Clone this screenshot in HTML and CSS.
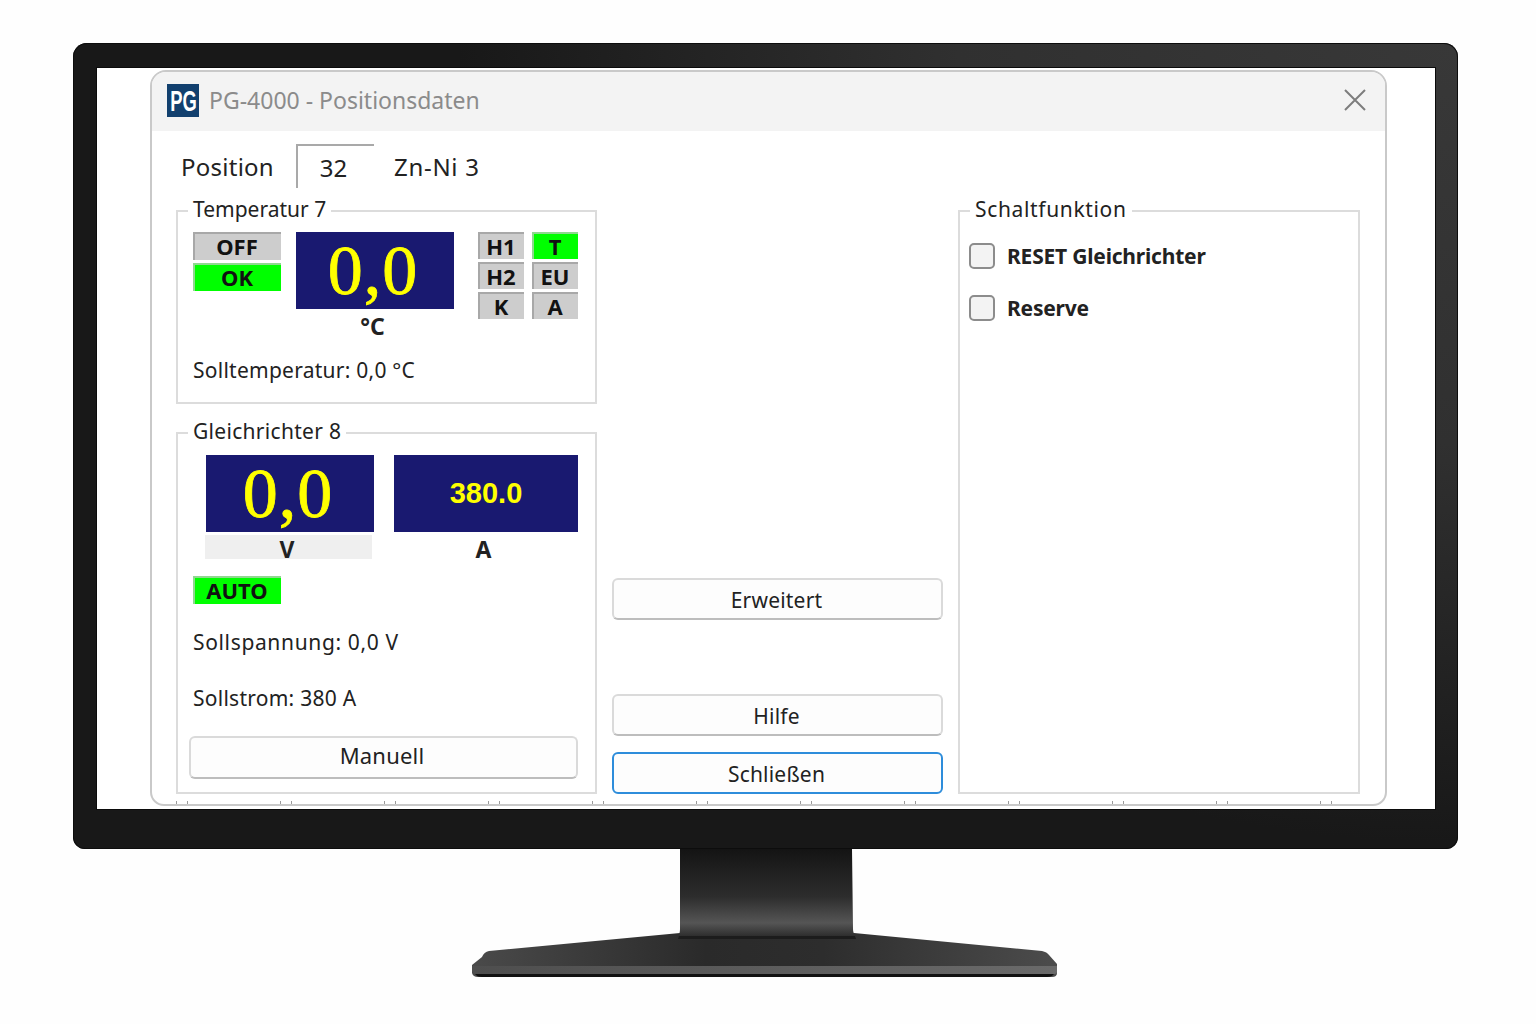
FILE: index.html
```html
<!DOCTYPE html>
<html lang="de">
<head>
  <meta charset="UTF-8" />
  <title>PG-4000 - Positionsdaten</title>
  <link rel="stylesheet" href="styles.css">
</head>
<body>
  <div class="monitor">
    <div class="screen">
      <div class="window">
        <div class="titlebar">
          <div class="logo"><span>PG</span></div>
          <div class="title">PG-4000 - Positionsdaten</div>
          <svg class="close" width="24" height="24" viewBox="0 0 24 24">
            <path d="M2 2 L22 22 M22 2 L2 22" stroke="#7d7d7d" stroke-width="2" fill="none"/>
          </svg>
        </div>

        <div class="content">
          <div class="position-row">
            <span class="position-label">Position</span>
            <span class="position-box">32</span>
            <span class="position-name">Zn-Ni 3</span>
          </div>

          <div class="columns">
            <div class="left-col">
              <div class="group group-temp">
                <span class="legend">Temperatur 7</span>
                <div class="temp-row">
                  <div class="badges">
                    <div class="badge">OFF</div>
                    <div class="badge badge-on">OK</div>
                  </div>
                  <div class="temp-display">
                    <div class="display display-large">0,0</div>
                    <div class="unit">°C</div>
                  </div>
                  <div class="mode-grid">
                    <div class="badge">H1</div>
                    <div class="badge badge-on">T</div>
                    <div class="badge">H2</div>
                    <div class="badge">EU</div>
                    <div class="badge">K</div>
                    <div class="badge">A</div>
                  </div>
                </div>
                <div class="info info-temp">Solltemperatur: 0,0 °C</div>
              </div>

              <div class="group group-rect">
                <span class="legend legend-rect">Gleichrichter 8</span>
                <div class="rect-row">
                  <div class="rect-volt">
                    <div class="display display-large">0,0</div>
                    <div class="unit unit-bar">V</div>
                  </div>
                  <div class="rect-amp">
                    <div class="display display-small">380.0</div>
                    <div class="unit unit-amp">A</div>
                  </div>
                </div>
                <div class="badge badge-on badge-auto">AUTO</div>
                <div class="info info-volt">Sollspannung: 0,0 V</div>
                <div class="info info-amp">Sollstrom: 380 A</div>
                <button class="btn btn-manual">Manuell</button>
              </div>
            </div>

            <div class="middle-col">
              <button class="btn btn-more">Erweitert</button>
              <button class="btn btn-help">Hilfe</button>
              <button class="btn btn-primary">Schließen</button>
            </div>

            <div class="group group-switch">
              <span class="legend legend-switch">Schaltfunktion</span>
              <label class="check"><span class="box"></span>RESET Gleichrichter</label>
              <label class="check"><span class="box"></span>Reserve</label>
            </div>
          </div>
        </div>
        <div class="ticks"></div>
      </div>
    </div>
  </div>

  <svg class="stand" width="600" height="128" viewBox="0 0 600 128">
    <defs>
      <linearGradient id="neck" x1="0" y1="0" x2="0" y2="1">
        <stop offset="0" stop-color="#141414"/>
        <stop offset="0.55" stop-color="#2d2d2d"/>
        <stop offset="0.85" stop-color="#555"/>
        <stop offset="1" stop-color="#2e2e2e"/>
      </linearGradient>
      <linearGradient id="base" x1="0" y1="0" x2="1" y2="0">
        <stop offset="0" stop-color="#4a4a4a"/>
        <stop offset="0.4" stop-color="#2a2a2a"/>
        <stop offset="0.6" stop-color="#2d2d2d"/>
        <stop offset="1" stop-color="#4c4c4c"/>
      </linearGradient>
      <linearGradient id="lip" x1="0" y1="0" x2="1" y2="0">
        <stop offset="0" stop-color="#4e4e4e"/>
        <stop offset="0.5" stop-color="#5c5c5c"/>
        <stop offset="1" stop-color="#6a6a6a"/>
      </linearGradient>
    </defs>
    <!-- base -->
    <path d="M208 84 L17 102 Q12 103 10 108 L0 116 L0 124 Q1 128 6 128 L580 128 Q585 128 585 124 L585 115 L577 106 Q575 103 570 102 L382 84 Z" fill="url(#base)"/>
    <path d="M0 117 L585 117 L585 123 Q585 125 581 125 L4 125 Q0 125 0 122 Z" fill="url(#lip)"/>
    <path d="M3 125 L582 125 Q580 128 575 128 L10 128 Q5 128 3 125 Z" fill="#111"/>
    <!-- neck -->
    <path d="M208 0 L380 0 L381 80 Q381 85 384 87 L206 87 Q208 85 208 80 Z" fill="url(#neck)"/>
    <path d="M207 87 L383 87 L384 90 L206 90 Z" fill="#1c1c1c"/>
  </svg>
</body>
</html>
```

FILE: styles.css
```css
body {
  margin: 0;
  background-color: #fefefe;
  font-family: "Noto Sans", "Open Sans", sans-serif;
  color: #222;
}

/* monitor */
.monitor {
  box-sizing: border-box;
  width: 1385px;
  height: 806px;
  margin: 43px 0 0 73px;
  padding: 25px 23px 40px 24px;
  background: radial-gradient(ellipse 1000px 800px at 100% 0, #383838 0%, #303030 50%, #181818 100%);
  border-radius: 14px 14px 12px 12px;
  box-shadow: inset 0 0 0 1px #0d0d0d;
}

.screen {
  box-sizing: border-box;
  height: 741px;
  padding: 2px 48px 3px 53px;
  background-color: #fff;
  box-shadow: 0 0 0 1px #0b0b0b;
}

.stand {
  display: block;
  margin: 0 0 0 472px;
}

/* window */
.window {
  position: relative;
  box-sizing: border-box;
  display: flex;
  flex-direction: column;
  height: 736px;
  border: 2px solid #c9c9c9;
  border-radius: 16px 16px 14px 14px;
  overflow: hidden;
}

.titlebar {
  display: flex;
  align-items: center;
  height: 56px;
  padding: 0 18px 3px 15px;
  background-color: #f3f3f3;
}

.logo {
  display: flex;
  align-items: center;
  justify-content: center;
  width: 32px;
  height: 33px;
  background-color: #12406e;
}

.logo span {
  display: block;
  color: #fff;
  font-family: "Liberation Sans", sans-serif;
  font-size: 20px;
  font-weight: bold;
  line-height: 20px;
  transform: scale(0.92, 1.5);
}

.title {
  flex: 1;
  margin-left: 10px;
  color: #8b8b8b;
  font-size: 23px;
}

.close {
  display: block;
}

.content {
  display: flex;
  flex: 1;
  flex-direction: column;
  padding: 13px 25px 10px 24px;
}

.position-row {
  display: flex;
  align-items: center;
  height: 44px;
  font-size: 24px;
}

.position-label {
  width: 115px;
  margin-left: 5px;
  padding-top: 1px;
  letter-spacing: 0.25px;
}

.position-box {
  box-sizing: border-box;
  width: 78px;
  height: 44px;
  padding-right: 5px;
  line-height: 44px;
  text-align: center;
  border-top: 2px solid #a9a9a9;
  border-left: 2px solid #a9a9a9;
}

.position-name {
  margin-left: 20px;
  padding-top: 1px;
  letter-spacing: 0.7px;
}

.columns {
  display: grid;
  flex: 1;
  grid-template-columns: 421px 331px 402px;
  column-gap: 15px;
  margin-top: 22px;
}

.left-col {
  display: flex;
  flex-direction: column;
  gap: 28px;
}

/* groups */
.group {
  position: relative;
  box-sizing: border-box;
  border: 2px solid #dcdcdc;
}

.legend {
  position: absolute;
  top: -17px;
  left: 10px;
  padding: 0 5px;
  background-color: #fff;
  font-size: 21px;
  line-height: 28px;
}

.legend-rect {
  letter-spacing: 0.3px;
}

.legend-switch {
  letter-spacing: 0.65px;
}

.group-temp {
  height: 194px;
  padding: 20px 0 0 15px;
}

.group-rect {
  flex: 1;
  padding: 21px 0 0 15px;
}

.group-switch {
  padding: 19px 0 0 9px;
}

/* badges */
.badge {
  box-sizing: border-box;
  height: 28px;
  padding-right: 2px;
  background-color: #cdcdcd;
  border-top: 2px solid #a8a8a8;
  border-left: 2px solid #a8a8a8;
  color: #111;
  font-size: 22px;
  font-weight: bold;
  line-height: 25px;
  text-align: center;
}

.badge-on {
  background-color: #00ff00;
  border-color: #8fd88f;
}

.badges {
  display: flex;
  flex-direction: column;
  gap: 3px;
  width: 88px;
}

.mode-grid {
  display: grid;
  grid-template-columns: 46px 46px;
  grid-auto-rows: 27px;
  gap: 3px 8px;
  margin-left: 24px;
}

.mode-grid .badge {
  height: 27px;
}

.temp-row {
  display: flex;
  align-items: flex-start;
}

.temp-display {
  width: 158px;
  margin-left: 15px;
}

/* displays */
.display {
  height: 77px;
  background-color: #191970;
  color: #ffff00;
  text-align: center;
}

.display-large {
  padding-right: 4px;
  box-sizing: border-box;
  font-family: "Liberation Serif", serif;
  font-size: 70px;
  line-height: 77px;
  letter-spacing: 1px;
  -webkit-text-stroke: 0.8px #ffff00;
}

.display-small {
  font-family: "Liberation Sans", sans-serif;
  font-size: 29px;
  font-weight: bold;
  line-height: 77px;
}

.unit {
  height: 34px;
  padding-right: 5px;
  font-size: 23px;
  font-weight: bold;
  line-height: 35px;
  text-align: center;
}

.unit-bar {
  height: 24px;
  padding-right: 3px;
  margin: 3px 2px 0 -1px;
  background-color: #efefef;
  line-height: 29px;
}

.unit-amp {
  height: 27px;
  padding-right: 0;
  margin-right: 5px;
  line-height: 35px;
}

.rect-row {
  display: flex;
  margin-left: 13px;
}

.rect-volt {
  width: 168px;
}

.rect-amp {
  width: 184px;
  margin-left: 20px;
}

.badge-auto {
  width: 88px;
  margin-top: 17px;
}

.info {
  font-size: 21px;
  line-height: 32px;
  letter-spacing: 0.25px;
}

.info-temp {
  margin-top: 11px;
}

.info-volt {
  margin-top: 22px;
  letter-spacing: 0.65px;
}

.info-amp {
  margin-top: 24px;
}

/* buttons */
.btn {
  box-sizing: border-box;
  width: 100%;
  height: 42px;
  padding: 2px 2px 0 0;
  background-color: #fdfdfd;
  border: 2px solid #dadada;
  border-bottom-color: #bdbdbd;
  border-radius: 6px;
  color: #222;
  font-family: inherit;
  font-size: 21px;
  letter-spacing: 0.2px;
}

.btn-manual {
  display: block;
  width: 389px;
  height: 43px;
  margin: 22px 0 0 -4px;
  padding: 0 3px 5px 0;
  font-size: 22px;
}

.middle-col {
  display: flex;
  flex-direction: column;
  justify-content: flex-end;
}

.btn-more {
  margin-bottom: 74px;
}

.btn-help {
  margin-bottom: 16px;
}

.btn-primary {
  border-color: #2e8ddb;
}

/* checkboxes */
.check {
  display: flex;
  align-items: center;
  height: 26px;
  margin-bottom: 26px;
  font-size: 21px;
  font-weight: bold;
  letter-spacing: -0.2px;
}

.box {
  box-sizing: border-box;
  width: 26px;
  height: 26px;
  margin-right: 12px;
  background-color: #f3f3f3;
  border: 2px solid #8c8c8c;
  border-radius: 5px;
}

.group-switch .check:first-of-type {
  margin-top: 12px;
}

/* small marks along the bottom edge of the window */
.ticks {
  position: absolute;
  left: 24px;
  right: 14px;
  bottom: 0;
  height: 3px;
  background-image: repeating-linear-gradient(90deg, #9a9a9a 0 1px, transparent 1px 11px, #9a9a9a 11px 12px, transparent 12px 104px);
}
```
